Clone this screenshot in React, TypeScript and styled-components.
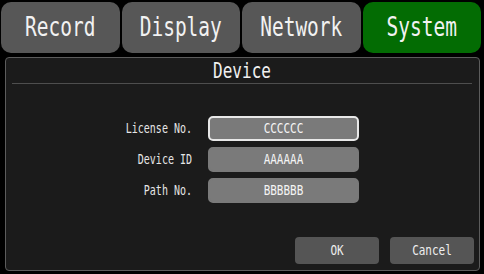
import { Fragment } from 'react';
import styled, { createGlobalStyle } from 'styled-components';

const GlobalStyle = createGlobalStyle`
  html, body {
    margin: 0;
    padding: 0;
    background: #000;
  }
  body {
    font-family: "DejaVu Sans Mono", "Liberation Mono", monospace;
    color: #eee;
  }
`;

const Screen = styled.div`
  width: 484px;
  height: 274px;
  background: #000;
  display: flex;
  flex-direction: column;
  overflow: hidden;
`;

const TabBar = styled.div`
  display: grid;
  grid-template-columns: repeat(4, 1fr);
  gap: 2px;
  height: 51px;
  padding: 2px 3px 0 1px;
`;

const Tab = styled.div<{ $active?: boolean }>`
  display: flex;
  align-items: center;
  justify-content: center;
  border-radius: 10px;
  background: ${p => (p.$active ? '#036c03' : '#575757')};
  color: #f2f2f2;
  font-size: 19.5px;
`;

const Tall = styled.span<{ $s?: number }>`
  display: inline-block;
  transform: scaleY(${p => p.$s ?? 1.3});
`;

const Panel = styled.div`
  margin: 4px 4px 3px 5px;
  flex: 1;
  border: 1px solid #5c5c5c;
  border-radius: 4px;
  background: #1b1b1b;
  display: flex;
  flex-direction: column;
  padding: 0 5px 6px 0;
`;

const Title = styled.div`
  height: 25px;
  margin: 0 2px 0 6px;
  border-bottom: 1px solid #4e4e4e;
  display: flex;
  align-items: center;
  justify-content: center;
  font-size: 16px;
  color: #f0f0f0;
`;

const Form = styled.div`
  display: grid;
  grid-template-columns: 186px 151px;
  column-gap: 16px;
  row-gap: 6px;
  margin-top: 32px;
`;

const Label = styled.div`
  display: flex;
  align-items: center;
  justify-content: flex-end;
  font-size: 10px;
  color: #e6e6e6;
`;

const Field = styled.div<{ $focused?: boolean }>`
  height: 25px;
  box-sizing: border-box;
  border-radius: 5px;
  background: #7a7a7a;
  border: ${p => (p.$focused ? '2px solid #e8e8e8' : '2px solid #7a7a7a')};
  display: flex;
  align-items: center;
  justify-content: center;
  font-size: 11px;
  color: #f4f4f4;
`;

const Actions = styled.div`
  margin-top: auto;
  display: flex;
  justify-content: flex-end;
  gap: 11px;
`;

const Button = styled.div`
  width: 84px;
  height: 27px;
  border-radius: 4px;
  background: #555;
  display: flex;
  align-items: center;
  justify-content: center;
  font-size: 11px;
  color: #eee;
`;

const tabs = ['Record', 'Display', 'Network', 'System'];

const fields = [
  { label: 'License No.', value: 'CCCCCC', focused: true },
  { label: 'Device ID', value: 'AAAAAA' },
  { label: 'Path No.', value: 'BBBBBB' },
];

export default function App() {
  return (
    <Screen>
      <GlobalStyle />
      <TabBar>
        {tabs.map(t => (
          <Tab key={t} $active={t === 'System'}>
            <Tall $s={1.34}>{t}</Tall>
          </Tab>
        ))}
      </TabBar>
      <Panel>
        <Title>
          <Tall>Device</Tall>
        </Title>
        <Form>
          {fields.map(f => (
            <Fragment key={f.label}>
              <Label>
                <Tall $s={1.35}>{f.label}</Tall>
              </Label>
              <Field $focused={f.focused}>
                <Tall $s={1.35}>{f.value}</Tall>
              </Field>
            </Fragment>
          ))}
        </Form>
        <Actions>
          <Button>
            <Tall $s={1.35}>OK</Tall>
          </Button>
          <Button>
            <Tall $s={1.35}>Cancel</Tall>
          </Button>
        </Actions>
      </Panel>
    </Screen>
  );
}
